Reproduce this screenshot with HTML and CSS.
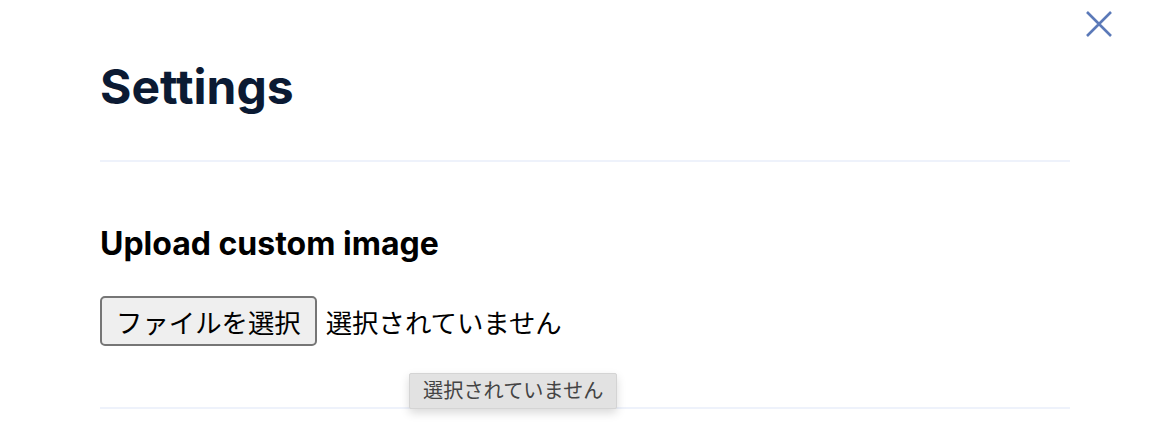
FILE: index.html
```
<!DOCTYPE html>
<html lang="ja">
<head>
<meta charset="utf-8">
<title>Settings</title>
<link rel="stylesheet" href="styles.css">
</head>
<body>
<div class="modal">
  <button class="close" aria-label="Close">
    <svg width="28" height="28" viewBox="0 0 28 28" aria-hidden="true"><path d="M2 2 L26 26 M26 2 L2 26" stroke="#5b79b8" stroke-width="2.6" fill="none"/></svg>
  </button>
  <div class="content">
    <h1 class="title">Settings</h1>
    <hr class="divider">
    <section class="section">
      <h2 class="section-title">Upload custom image</h2>
      <div class="file-row">
        <span class="file-button">ファイルを選択</span>
        <span class="file-status">選択されていません</span>
        <div class="tooltip">選択されていません</div>
      </div>
    </section>
    <hr class="divider">
  </div>
</div>
</body>
</html>
```
FILE: styles.css
```
html, body {
  margin: 0;
  padding: 0;
  background: #ffffff;
}
.modal {
  position: relative;
  width: 1170px;
  height: 442px;
  overflow: hidden;
  font-family: Inter, "Noto Sans", sans-serif;
}
.close {
  position: absolute;
  top: 10px;
  right: 57px;
  width: 28px;
  height: 28px;
  padding: 0;
  border: 0;
  background: none;
  display: flex;
}
.content {
  padding: 57px 100px 0 100px;
}
.title {
  margin: 0;
  font-size: 48px;
  line-height: 60px;
  font-weight: 700;
  color: #0b1a33;
  letter-spacing: 0;
}
.divider {
  margin: 0;
  border: 0;
  height: 2px;
  background: #eef2fb;
}
.content > .divider:first-of-type {
  margin-top: 43px;
}
.section {
  padding-top: 64px;
  padding-bottom: 61px;
}
.section-title {
  margin: 0 0 34px 0;
  font-size: 32px;
  line-height: 36px;
  font-weight: 700;
  color: #000;
}
.file-row {
  position: relative;
  display: flex;
  align-items: center;
  gap: 9px;
  font-family: "Liberation Sans", "Noto Sans CJK JP", sans-serif;
  font-size: 26.4px;
}
.file-button {
  display: flex;
  align-items: center;
  height: 46px;
  padding: 0 14px;
  border: 2px solid #767676;
  border-radius: 5px;
  background: #efefef;
  color: #000;
}
.file-status {
  color: #000;
}
.tooltip {
  position: absolute;
  left: 309px;
  top: 77px;
  padding: 4px 13px;
  background: #e2e2e2;
  border: 1px solid #d4d4d4;
  border-radius: 2px;
  color: #444;
  font-size: 20.2px;
  line-height: 26px;
  box-shadow: 0 4px 10px rgba(0,0,0,0.15);
  z-index: 2;
}
```
